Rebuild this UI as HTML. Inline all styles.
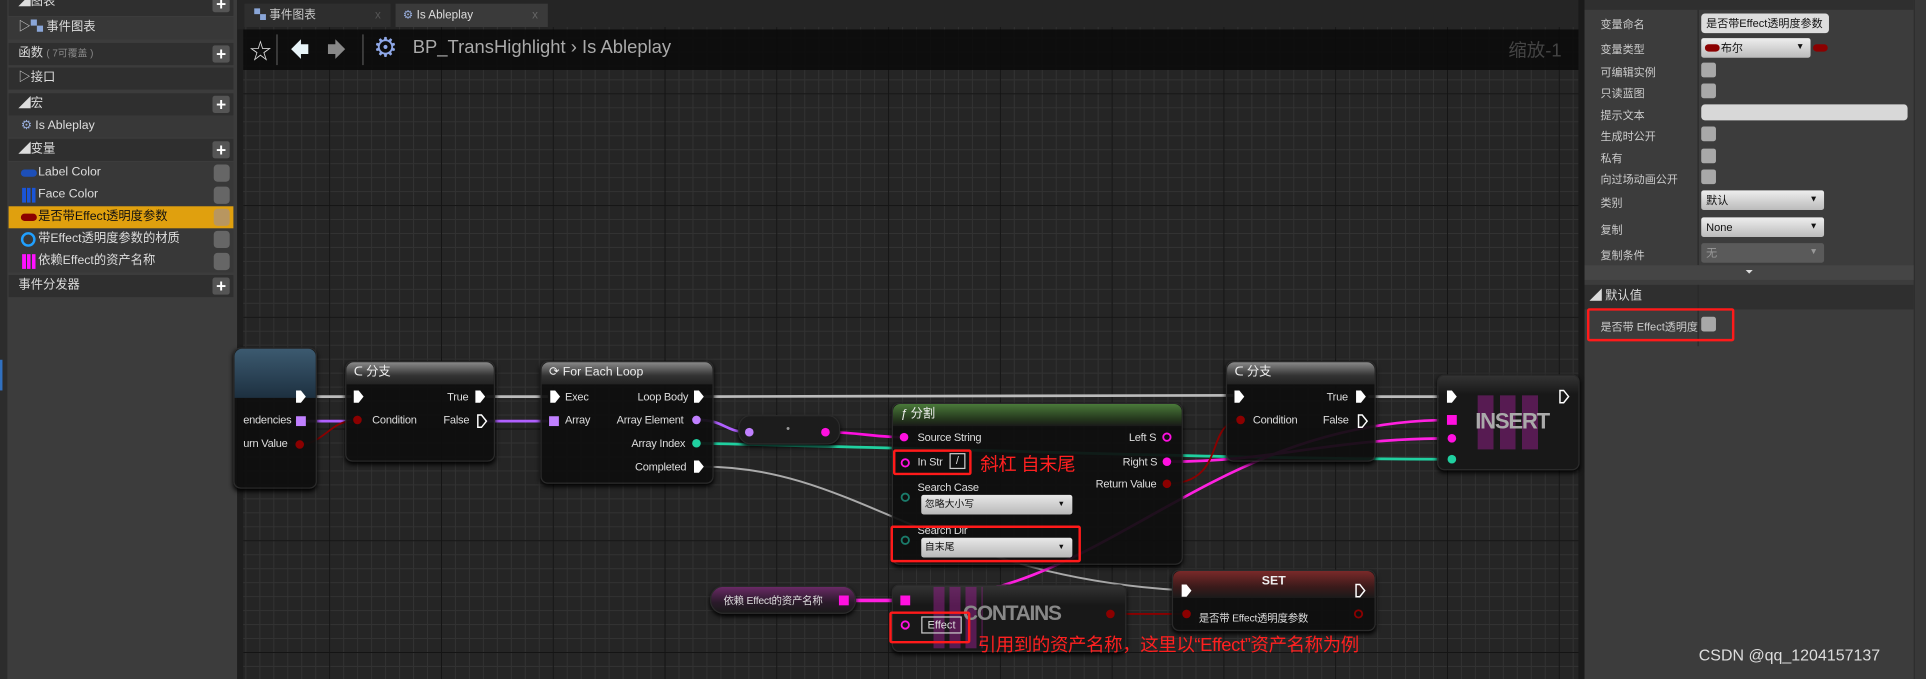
<!DOCTYPE html><html><head><meta charset="utf-8"><style>
*{margin:0;padding:0;box-sizing:border-box}
html,body{width:1926px;height:679px;overflow:hidden;background:#1e1e1e}
#w{position:absolute;left:0;top:0;width:1568px;height:553px;transform:scale(1.22832,1.22785);transform-origin:0 0;font-family:"Liberation Sans","Noto Sans CJK SC",sans-serif;color:#ddd;font-size:10px}
.a{position:absolute}
.row{position:absolute;left:7px;width:183px;height:18px;background:#383838;line-height:18px;padding-left:8px;font-size:10px;color:#ddd}
.hd{background:#2f2f2f}
.plus{position:absolute;right:3px;top:2px;width:14px;height:14px;background:#555;border-radius:2px;color:#fff;font-weight:bold;text-align:center;line-height:14px;font-size:14px}
.eye{position:absolute;right:3px;top:2px;width:13px;height:14px;background:#666;border-radius:3px}
.node{position:absolute;background:rgba(14,14,14,.93);border-radius:6px;box-shadow:0 2px 4px #000;border:1px solid #2a2a2a}
.nh{position:absolute;left:0;top:0;right:0;height:18px;border-radius:6px 6px 0 0;background:linear-gradient(#8a8a8a,#333 60%,#222);font-size:10px;line-height:18px;padding-left:6px;color:#eee}
.t{position:absolute;font-size:9px;color:#ddd;white-space:nowrap;letter-spacing:-0.2px}
.rp{position:absolute;font-size:9px;color:#ccc;left:1303px}
.cb{position:absolute;left:1385px;width:12px;height:12px;background:#a8a8a8;border-radius:2px}
.dd{position:absolute;left:1385px;width:100px;height:16px;background:linear-gradient(#eee,#bbb);border-radius:2px;color:#111;font-size:9px;line-height:16px;padding-left:4px}
.dd:after{content:"▼";position:absolute;right:5px;font-size:7px}
.rb{position:absolute;border:2px solid #ff1a1a;border-radius:2px}
.red{position:absolute;color:#ff2020;font-size:15px;white-space:nowrap;letter-spacing:-0.3px}
</style></head><body><div id="w">
<div class="a" style="left:0;top:0;width:193px;height:553px;background:#3c3c3c"></div>
<div class="a" style="left:0;top:0;width:6px;height:553px;background:#2c2c2c"></div>
<div class="row hd" style="top:-5px;height:18px;line-height:14px">◢图表<div class="plus" style="top:1px">+</div></div>
<div class="row" style="top:14px">▷<span style="color:#8aa6d8">▚</span> 事件图表</div>
<div class="row hd" style="top:35px;padding-left:8px">函数 <span style="color:#888;font-size:8px">( 7可覆盖 )</span><div class="plus">+</div></div>
<div class="row hd" style="top:55px">▷接口</div>
<div class="row hd" style="top:76px">◢宏<div class="plus">+</div></div>
<div class="row" style="top:94px;padding-left:10px"><span style="color:#9ab0e0">⚙</span> Is Ableplay</div>
<div class="row hd" style="top:113px">◢变量<div class="plus">+</div></div>
<div class="row" style="top:132px;padding-left:24px"><span class="a" style="left:10px;top:6px;width:13px;height:6px;background:#1d4fb8;border-radius:3px"></span>Label Color<div class="eye"></div></div>
<div class="row" style="top:150px;padding-left:24px"><span class="a" style="left:11px;top:3px;width:11px;height:12px;background:repeating-linear-gradient(90deg,#1a55d8 0 3px,#383838 3px 4px)"></span>Face Color<div class="eye"></div></div>
<div class="row" style="top:168px;padding-left:24px;background:#e0a00e;color:#111"><span class="a" style="left:10px;top:6px;width:13px;height:6px;background:#8b0000;border-radius:3px"></span>是否带Effect透明度参数<div class="eye" style="background:#b89660"></div></div>
<div class="row" style="top:186px;padding-left:24px"><span class="a" style="left:10px;top:3px;width:12px;height:12px;border:2px solid #20a0ff;border-radius:50%"></span>带Effect透明度参数的材质<div class="eye"></div></div>
<div class="row" style="top:204px;padding-left:24px"><span class="a" style="left:11px;top:3px;width:11px;height:12px;background:repeating-linear-gradient(90deg,#ff10ff 0 3px,#383838 3px 4px)"></span>依赖Effect的资产名称<div class="eye"></div></div>
<div class="row hd" style="top:224px">事件分发器<div class="plus">+</div></div>
<div class="a" style="left:0;top:293px;width:2px;height:25px;background:#3070c0"></div>
<div class="a" style="left:193px;top:0;width:1097px;height:24px;background:#252525"></div>
<div class="a" style="left:199px;top:3px;width:119px;height:19px;background:#2e2e2e;font-size:9.5px;line-height:19px;padding-left:8px;color:#ccc"><span style="color:#8aa6d8">▚</span> 事件图表<span style="position:absolute;right:8px;color:#555">x</span></div>
<div class="a" style="left:322px;top:3px;width:124px;height:19px;background:#3a3a3a;font-size:9.5px;line-height:19px;padding-left:6px;color:#ddd"><span style="color:#9ab0e0">⚙</span> Is Ableplay<span style="position:absolute;right:8px;color:#666">x</span></div>
<div class="a" style="left:198px;top:22px;width:1088px;height:531px;background-color:#252525;background-image:linear-gradient(90deg,#141414 1px,transparent 1px),linear-gradient(#141414 1px,transparent 1px),linear-gradient(90deg,#323232 1px,transparent 1px),linear-gradient(#323232 1px,transparent 1px);background-size:91px 91px,91px 91px,11.375px 11.375px,11.375px 11.375px;background-position:70px 54px,70px 54px,70px 54px,70px 54px"></div>
<div class="a" style="left:198px;top:24px;width:1088px;height:33px;background:rgba(10,10,10,.88)"></div>
<div class="a" style="left:203px;top:28px;font-size:18px;color:#ddd">☆</div>
<div class="a" style="left:225px;top:28px;width:1px;height:25px;background:#555"></div>
<svg class="a" style="left:234px;top:30px" width="50" height="20"><path d="M3 10 L11 2 L11 6 L17 6 L17 14 L11 14 L11 18Z" fill="#e8f4f8"/><path d="M47 10 L39 2 L39 6 L33 6 L33 14 L39 14 L39 18Z" fill="#888"/></svg>
<div class="a" style="left:295px;top:28px;width:1px;height:25px;background:#555"></div>
<div class="a" style="left:304px;top:26px;font-size:22px;color:#8fa8e8">⚙</div>
<div class="a" style="left:336px;top:30px;font-size:15px;color:#aaa">BP_TransHighlight › Is Ableplay</div>
<div class="a" style="left:1228px;top:30px;font-size:15px;color:#444">缩放-1</div>
<div class="a" style="left:1285px;top:0;width:5px;height:553px;background:#1a1a1a"></div>
<svg class="a" style="left:0;top:0" width="1290" height="553">
<g fill="none" stroke-width="2.2">
<path d="M252 323 L286 323 M396 323 L446 323 M572 323 L1004 322 M1114 323 L1177 323" stroke="#bbb"/>
<path d="M572 380 C700 380 760 470 966 481" stroke="#aaa" stroke-width="1.6"/>
<path d="M240 343 L286 343 M395 343 L446 343" stroke="#b060ff"/>
<path d="M568 342 C590 342 590 352 610 352" stroke="#b060ff"/>
<path d="M672 352 C700 352 710 356 735 356" stroke="#ff10e0"/>
<path d="M568 361 C800 366 1000 374 1182 374" stroke="#20d0a0"/>
<path d="M950 376 C1040 376 1080 357 1182 357" stroke="#ff20e0"/>
<path d="M736 489 C900 489 980 342 1182 342" stroke="#ff20e0"/>
<path d="M695 489 L736 489" stroke="#ff20e0" stroke-width="3"/>
<path d="M950 394 C1000 394 980 343 1010 343" stroke="#8b0000" stroke-width="1.5"/>
<path d="M244 362 C262 362 270 343 286 343" stroke="#8b0000" stroke-width="1.5"/>
<path d="M904 500 L966 500" stroke="#8b0000" stroke-width="1.5"/>
</g></svg>
<div class="node" style="left:190px;top:283px;width:68px;height:115px"><div class="nh" style="background:linear-gradient(#3c5a70,#1d3040);height:40px"></div></div>
<div class="t" style="left:198px;top:337px">endencies</div><div class="t" style="left:198px;top:356px">urn Value</div>
<div class="node" style="left:281px;top:294px;width:122px;height:82px"><div class="nh">ᑕ 分支</div></div>
<div class="t" style="left:303px;top:337px">Condition</div><div class="t" style="left:364px;top:318px">True</div><div class="t" style="left:361px;top:337px">False</div>
<div class="node" style="left:440px;top:294px;width:141px;height:100px"><div class="nh">⟳ For Each Loop</div></div>
<div class="t" style="left:460px;top:318px">Exec</div><div class="t" style="left:460px;top:337px">Array</div>
<div class="t" style="left:519px;top:318px">Loop Body</div><div class="t" style="left:502px;top:337px">Array Element</div><div class="t" style="left:514px;top:356px">Array Index</div><div class="t" style="left:517px;top:375px">Completed</div>
<div class="node" style="left:601px;top:338px;width:83px;height:24px;border-radius:10px;background:#1c1c1c"></div>
<div class="t" style="left:640px;top:344px;color:#999">•</div>
<div class="node" style="left:726px;top:328px;width:237px;height:132px"><div class="nh" style="background:linear-gradient(#4a7a3a,#24361c 70%,#1a1a1a)"><i>ƒ</i> 分割</div></div>
<div class="t" style="left:747px;top:351px">Source String</div><div class="t" style="left:747px;top:371px">In Str</div>
<div class="a" style="left:773px;top:369px;width:13px;height:13px;border:1px solid #ccc;font-size:9px;text-align:center;line-height:11px">/</div>
<div class="t" style="left:747px;top:392px">Search Case</div><div class="t" style="left:747px;top:427px">Search Dir</div>
<div class="a" style="left:750px;top:403px;width:123px;height:16px;background:linear-gradient(#e8e8e8,#b8b8b8);border-radius:2px;font-size:8px;color:#111;line-height:16px;padding-left:3px">忽略大小写<span style="position:absolute;right:6px;font-size:6px">▼</span></div>
<div class="a" style="left:750px;top:438px;width:123px;height:16px;background:linear-gradient(#e8e8e8,#b8b8b8);border-radius:2px;font-size:8px;color:#111;line-height:16px;padding-left:3px">自末尾<span style="position:absolute;right:6px;font-size:6px">▼</span></div>
<div class="t" style="left:919px;top:351px">Left S</div><div class="t" style="left:914px;top:371px">Right S</div><div class="t" style="left:892px;top:389px">Return Value</div>
<div class="node" style="left:578px;top:477px;width:119px;height:23px;border-radius:11px;background:linear-gradient(#6a2a66,#2a1a2a 60%,#1a1a1a)"></div>
<div class="t" style="left:589px;top:483px;font-size:8.5px">依赖 Effect的资产名称</div>
<div class="node" style="left:726px;top:476px;width:191px;height:55px;background:linear-gradient(#333,#181818 30%)"></div>
<div class="a" style="left:760px;top:478px;width:40px;height:50px;background:repeating-linear-gradient(90deg,rgba(150,30,140,.5) 0 9px,transparent 9px 13px)"></div>
<div class="a" style="left:784px;top:490px;font-size:17px;font-weight:bold;color:#888;letter-spacing:-1px">CONTAINS</div>
<div class="a" style="left:750px;top:502px;width:33px;height:14px;border:1px solid #ccc;font-size:9px;text-align:center;line-height:12px">Effect</div>
<div class="node" style="left:954px;top:464px;width:166px;height:50px"><div class="nh" style="height:22px;background:linear-gradient(#7a2a2a,#3a1a1a 60%,#1a1a1a);text-align:center;padding:0;font-weight:bold">SET</div></div>
<div class="t" style="left:976px;top:497px;font-size:8.5px">是否带 Effect透明度参数</div>
<div class="node" style="left:998px;top:294px;width:122px;height:82px"><div class="nh">ᑕ 分支</div></div>
<div class="t" style="left:1020px;top:337px">Condition</div><div class="t" style="left:1080px;top:318px">True</div><div class="t" style="left:1077px;top:337px">False</div>
<div class="node" style="left:1170px;top:305px;width:116px;height:78px;background:linear-gradient(#333,#181818 20%)"></div>
<div class="a" style="left:1203px;top:322px;width:52px;height:44px;background:repeating-linear-gradient(90deg,rgba(150,30,140,.5) 0 13px,transparent 13px 18px)"></div>
<div class="a" style="left:1201px;top:333px;font-size:18px;font-weight:bold;color:#aaa;letter-spacing:-1px">INSERT</div>
<svg class="a" style="left:0;top:0" width="1290" height="553">
<g fill="#fff"><path d="M241 318h4l4 5-4 5h-4z"/><path d="M288 318h4l4 5-4 5h-4z"/><path d="M387 318h4l4 5-4 5h-4z"/><path d="M448 318h4l4 5-4 5h-4z"/><path d="M565 318h4l4 5-4 5h-4z"/><path d="M565 375h4l4 5-4 5h-4z"/><path d="M1005 318h4l4 5-4 5h-4z"/><path d="M1104 318h4l4 5-4 5h-4z"/><path d="M1178 318h4l4 5-4 5h-4z"/><path d="M962 476h4l4 5-4 5h-4z"/></g>
<g fill="none" stroke="#fff" stroke-width="1.2"><path d="M389 338h3l4 5-4 5h-3z"/><path d="M1106 338h3l4 5-4 5h-3z"/><path d="M1270 318h3l4 5-4 5h-3z"/><path d="M1104 476h3l4 5-4 5h-3z"/></g>
<g fill="#8b0000"><circle cx="244" cy="362" r="3.5"/><circle cx="291" cy="342" r="3.5"/><circle cx="1010" cy="342" r="3.5"/><circle cx="950" cy="394" r="3.5"/><circle cx="904" cy="500" r="3.5"/><circle cx="966" cy="500" r="3.5"/></g>
<circle cx="1106" cy="500" r="3" fill="none" stroke="#8b0000" stroke-width="1.5"/>
<g fill="#c080ff"><circle cx="567" cy="342" r="3.5"/><circle cx="610" cy="352" r="3.5"/></g>
<g fill="#ff10e0"><circle cx="672" cy="352" r="3.5"/><circle cx="736" cy="356" r="3.5"/><circle cx="950" cy="376" r="3.5"/><circle cx="1182" cy="357" r="3.5"/></g>
<g fill="none" stroke="#ff10e0" stroke-width="1.5"><circle cx="737" cy="377" r="3"/><circle cx="950" cy="356" r="3"/><circle cx="737" cy="509" r="3"/></g>
<g fill="#20d0a0"><circle cx="567" cy="361" r="3.5"/><circle cx="1182" cy="374" r="3.5"/></g>
<g fill="none" stroke="#1a7a6a" stroke-width="1.5"><circle cx="737" cy="405" r="3"/><circle cx="737" cy="440" r="3"/></g>
<g fill="#c080ff"><rect x="241" y="339" width="8" height="8"/><rect x="447" y="339" width="8" height="8"/></g>
<g fill="#ff10e0"><rect x="1178" y="338" width="8" height="8"/><rect x="733" y="485" width="8" height="8"/><rect x="683" y="485" width="8" height="8"/></g>
</svg>
<div class="rb" style="left:727px;top:366px;width:64px;height:21px"></div>
<div class="rb" style="left:725px;top:428px;width:155px;height:30px"></div>
<div class="rb" style="left:724px;top:498px;width:66px;height:26px"></div>
<div class="red" style="left:798px;top:367px">斜杠 自末尾</div>
<div class="red" style="left:796px;top:514px">引用到的资产名称，这里以“Effect”资产名称为例</div>
<div class="a" style="left:1290px;top:0;width:278px;height:553px;background:#3c3c3c"></div>
<div class="a" style="left:1290px;top:0;width:268px;height:8px;background:#2f2f2f"></div>
<div class="a" style="left:1382px;top:8px;width:1px;height:208px;background:#2a2a2a"></div>
<div class="a" style="left:1558px;top:0;width:10px;height:553px;background:#383838;border-left:1px solid #2e2e2e"></div>
<div class="rp" style="top:13px">变量命名</div>
<div class="a" style="left:1385px;top:11px;width:104px;height:16px;background:#ddd;border-radius:3px;color:#111;font-size:9px;line-height:16px;padding-left:4px">是否带Effect透明度参数</div>
<div class="rp" style="top:33px">变量类型</div>
<div class="dd" style="top:31px;width:89px;padding-left:16px">布尔<span class="a" style="left:3px;top:5px;width:12px;height:6px;background:#8b0000;border-radius:3px"></span></div>
<div class="a" style="left:1476px;top:36px;width:12px;height:6px;background:#8b0000;border-radius:3px"></div>
<div class="rp" style="top:52px">可编辑实例</div><div class="cb" style="top:51px"></div>
<div class="rp" style="top:69px">只读蓝图</div><div class="cb" style="top:68px"></div>
<div class="rp" style="top:87px">提示文本</div>
<div class="a" style="left:1385px;top:85px;width:168px;height:13px;background:#d8d8d8;border-radius:3px"></div>
<div class="rp" style="top:104px">生成时公开</div><div class="cb" style="top:103px"></div>
<div class="rp" style="top:122px">私有</div><div class="cb" style="top:121px"></div>
<div class="rp" style="top:139px">向过场动画公开</div><div class="cb" style="top:138px"></div>
<div class="rp" style="top:158px">类别</div><div class="dd" style="top:155px">默认</div>
<div class="rp" style="top:180px">复制</div><div class="dd" style="top:177px">None</div>
<div class="rp" style="top:201px">复制条件</div><div class="dd" style="top:198px;background:#5a5a5a;color:#999">无</div>
<div class="a" style="left:1290px;top:216px;width:268px;height:12px;background:#454545;text-align:center;font-size:8px;line-height:12px;color:#ddd">⏷</div>
<div class="a" style="left:1290px;top:232px;width:268px;height:20px;background:#2f2f2f;font-size:10px;line-height:20px;padding-left:4px">◢ 默认值</div>
<div class="a" style="left:1382px;top:232px;width:1px;height:50px;background:#2a2a2a"></div>
<div class="rp" style="top:259px">是否带 Effect透明度</div><div class="cb" style="top:258px"></div>
<div class="rb" style="left:1292px;top:251px;width:120px;height:27px"></div>
<div class="a" style="left:1383px;top:526px;font-size:13px;color:#ddd">CSDN @qq_1204157137</div>
</div></body></html>
